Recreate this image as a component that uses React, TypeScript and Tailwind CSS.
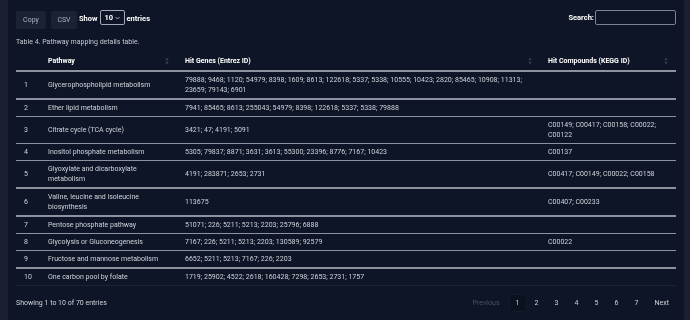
import React from 'react';

type Row = { pathway: string; genes: string; compounds: string; thick?: boolean };

const rows: Row[] = [
  {
    pathway: 'Glycerophospholipid metabolism',
    genes:
      '79888; 9468; 1120; 54979; 8398; 1609; 8613; 122618; 5337; 5338; 10555; 10423; 2820; 85465; 10908; 11313; 23659; 79143; 6901',
    compounds: '',
    thick: true,
  },
  { pathway: 'Ether lipid metabolism', genes: '7941; 85465; 8613; 255043; 54979; 8398; 122618; 5337; 5338; 79888', compounds: '' },
  { pathway: 'Citrate cycle (TCA cycle)', genes: '3421; 47; 4191; 5091', compounds: 'C00149; C00417; C00158; C00022; C00122' },
  { pathway: 'Inositol phosphate metabolism', genes: '5305; 79837; 8871; 3631; 3613; 55300; 23396; 8776; 7167; 10423', compounds: 'C00137' },
  { pathway: 'Glyoxylate and dicarboxylate metabolism', genes: '4191; 283871; 2653; 2731', compounds: 'C00417; C00149; C00022; C00158', thick: true },
  { pathway: 'Valine, leucine and isoleucine biosynthesis', genes: '113675', compounds: 'C00407; C00233', thick: true },
  { pathway: 'Pentose phosphate pathway', genes: '51071; 226; 5211; 5213; 2203; 25796; 6888', compounds: '' },
  { pathway: 'Glycolysis or Gluconeogenesis', genes: '7167; 226; 5211; 5213; 2203; 130589; 92579', compounds: 'C00022' },
  { pathway: 'Fructose and mannose metabolism', genes: '6652; 5211; 5213; 7167; 226; 2203', compounds: '', thick: true },
  { pathway: 'One carbon pool by folate', genes: '1719; 25902; 4522; 2618; 160428; 7298; 2653; 2731; 1757', compounds: '' },
];

const SortIcon = () => (
  <svg width="4" height="8" viewBox="0 0 4 8" className="shrink-0">
    <path d="M2 0.5 L3.6 3.2 L0.4 3.2 Z" fill="#3b4455" />
    <path d="M2 7.5 L3.6 4.8 L0.4 4.8 Z" fill="#3b4455" />
  </svg>
);

export default function App() {
  return (
    <div className="flex h-[320px] w-[690px] overflow-hidden bg-[#0d1526] font-['Roboto','Liberation_Sans',sans-serif] text-[7.5px] text-[#cfd4db]">
      <div className="w-2 shrink-0 bg-[#1a2030]" />
      {/* own layer, no background: small text gets grayscale antialiasing */}
      <div className="flex min-w-0 flex-1 flex-col px-2 pt-[10px] will-change-transform">
        <div className="flex h-[19px] items-start justify-between">
          <div className="flex items-center">
            <button className="mt-px h-[18px] w-[30px] rounded-[2px] bg-[#1a2234] text-[7px] text-[#aab1bc]">Copy</button>
            <button className="ml-[5px] mt-px h-[18px] w-[26px] rounded-[2px] bg-[#1a2234] text-[7px] text-[#aab1bc]">CSV</button>
            <span className="ml-[2px] self-start pt-[3px] font-bold text-white">Show</span>
            <div className="ml-[2px] flex h-[15px] w-[25px] items-center justify-between self-start rounded-[2px] border border-[#a3aab5] px-[4px] font-bold text-white">
              <span>10</span>
              <svg width="5" height="4" viewBox="0 0 5 4">
                <path d="M0.5 1 L2.5 3 L4.5 1" stroke="#d1d5db" strokeWidth="0.8" fill="none" />
              </svg>
            </div>
            <span className="ml-[2px] self-start pt-[3px] font-bold text-white">entries</span>
          </div>
          <div className="flex items-center">
            <span className="font-bold text-white">Search:</span>
            <div className="ml-px h-[15px] w-[81px] rounded-[2px] border border-[#7b8391]" />
          </div>
        </div>

        <div className="mt-[8px] text-[7px] leading-[10px] text-[#c3c8d0]">Table 4. Pathway mapping details table.</div>

        <table className="mt-[5px] w-[660px] table-fixed border-collapse leading-[10px]">
          <colgroup>
            <col className="w-[24px]" />
            <col className="w-[137px]" />
            <col className="w-[363px]" />
            <col className="w-[136px]" />
          </colgroup>
          <thead>
            <tr className="border-b-2 border-[#8c939e] text-left text-[7px] font-bold text-white">
              <th className="py-[4px]" />
              <th className="px-2 py-[4px]">
                <div className="flex items-center justify-between">
                  <span>Pathway</span>
                  <SortIcon />
                </div>
              </th>
              <th className="px-2 py-[4px]">
                <div className="flex items-center justify-between">
                  <span>Hit Genes (Entrez ID)</span>
                  <SortIcon />
                </div>
              </th>
              <th className="px-2 py-[4px]">
                <div className="flex items-center justify-between">
                  <span>Hit Compounds (KEGG ID)</span>
                  <SortIcon />
                </div>
              </th>
            </tr>
          </thead>
          <tbody className="text-[7px] text-[#cfd4db]">
            {rows.map((r, i) => (
              <tr
                key={i}
                className={
                  i === rows.length - 1
                    ? 'border-b border-[#1c2434]'
                    : r.thick
                      ? 'border-b-2 border-[#8c939e]'
                      : 'border-b border-[#8c939e]'
                }
              >
                <td className="py-[3px] pl-2 align-middle">{i + 1}</td>
                <td className="px-2 py-[3px] align-middle">{r.pathway}</td>
                <td className="px-2 py-[3px] align-middle">{r.genes}</td>
                <td className="px-2 py-[3px] align-middle">{r.compounds}</td>
              </tr>
            ))}
          </tbody>
        </table>

        <div className="mt-[8px] flex items-center justify-between pr-[7px] text-[7px]">
          <span>Showing 1 to 10 of 70 entries</span>
          <div className="flex items-center">
            <span className="mr-[9px] text-[#4a5366]">Previous</span>
            <span className="flex h-[18px] w-[18px] items-center justify-center rounded-[2px] border border-[#131b2b] bg-[#0a111f]">1</span>
            {['2', '3', '4', '5', '6', '7'].map((n) => (
              <span key={n} className="flex h-[18px] w-[20px] items-center justify-center">{n}</span>
            ))}
            <span className="ml-[8px]">Next</span>
          </div>
        </div>
      </div>
      <div className="w-1.5 shrink-0 bg-[#1a2030]" />
    </div>
  );
}
